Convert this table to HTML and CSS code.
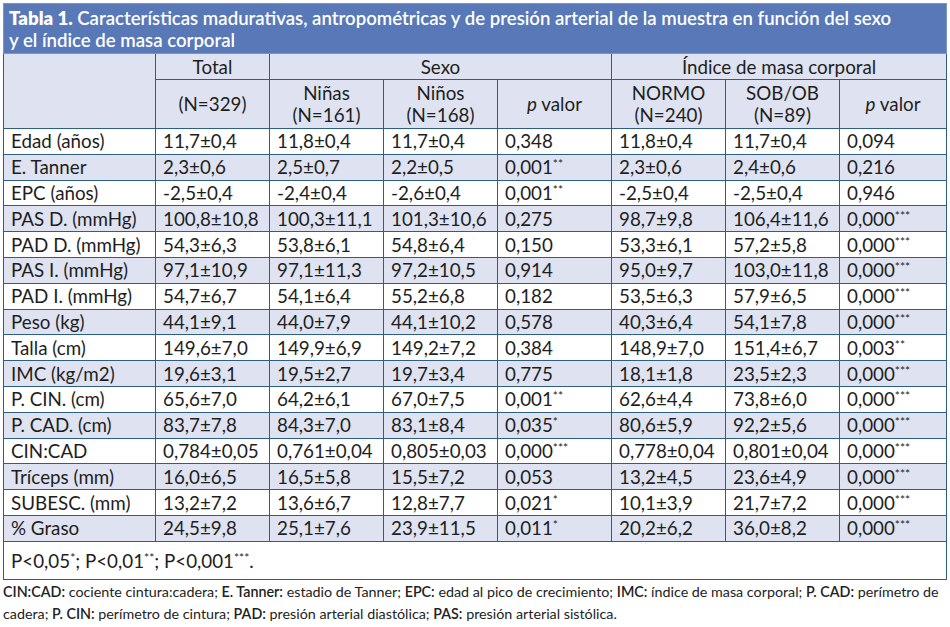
FILE: index.html
```html
<!DOCTYPE html>
<html lang="es">
<head>
<meta charset="utf-8">
<title>Tabla 1</title>
<link rel="stylesheet" href="styles.css">
</head>
<body>
<div class="page">
<table class="data">
  <colgroup>
    <col class="c-label"><col class="c-num"><col class="c-num"><col class="c-num"><col class="c-num"><col class="c-num"><col class="c-num"><col class="c-last">
  </colgroup>
  <thead>
    <tr><th colspan="8" class="title"><b>Tabla 1.</b> Características madurativas, antropométricas y de presión arterial de la muestra en función del sexo<br>y el índice de masa corporal</th></tr>
    <tr class="h1">
      <th rowspan="2"></th>
      <th>Total</th>
      <th colspan="3">Sexo</th>
      <th colspan="3">Índice de masa corporal</th>
    </tr>
    <tr class="h2">
      <th>(N=329)</th>
      <th>Niñas<br>(N=161)</th>
      <th>Niños<br>(N=168)</th>
      <th><i>p</i> valor</th>
      <th>NORMO<br>(N=240)</th>
      <th>SOB/OB<br>(N=89)</th>
      <th><i>p</i> valor</th>
    </tr>
  </thead>
  <tbody>
    <tr><td>Edad (años)</td><td>11,7±0,4</td><td>11,8±0,4</td><td>11,7±0,4</td><td>0,348</td><td>11,8±0,4</td><td>11,7±0,4</td><td>0,094</td></tr>
    <tr><td>E. Tanner</td><td>2,3±0,6</td><td>2,5±0,7</td><td>2,2±0,5</td><td>0,001<sup>**</sup></td><td>2,3±0,6</td><td>2,4±0,6</td><td>0,216</td></tr>
    <tr><td>EPC (años)</td><td>-2,5±0,4</td><td>-2,4±0,4</td><td>-2,6±0,4</td><td>0,001<sup>**</sup></td><td>-2,5±0,4</td><td>-2,5±0,4</td><td>0,946</td></tr>
    <tr><td>PAS D. (mmHg)</td><td>100,8±10,8</td><td>100,3±11,1</td><td>101,3±10,6</td><td>0,275</td><td>98,7±9,8</td><td>106,4±11,6</td><td>0,000<sup>***</sup></td></tr>
    <tr><td>PAD D. (mmHg)</td><td>54,3±6,3</td><td>53,8±6,1</td><td>54,8±6,4</td><td>0,150</td><td>53,3±6,1</td><td>57,2±5,8</td><td>0,000<sup>***</sup></td></tr>
    <tr><td>PAS I. (mmHg)</td><td>97,1±10,9</td><td>97,1±11,3</td><td>97,2±10,5</td><td>0,914</td><td>95,0±9,7</td><td>103,0±11,8</td><td>0,000<sup>***</sup></td></tr>
    <tr><td>PAD I. (mmHg)</td><td>54,7±6,7</td><td>54,1±6,4</td><td>55,2±6,8</td><td>0,182</td><td>53,5±6,3</td><td>57,9±6,5</td><td>0,000<sup>***</sup></td></tr>
    <tr><td>Peso (kg)</td><td>44,1±9,1</td><td>44,0±7,9</td><td>44,1±10,2</td><td>0,578</td><td>40,3±6,4</td><td>54,1±7,8</td><td>0,000<sup>***</sup></td></tr>
    <tr><td>Talla (cm)</td><td>149,6±7,0</td><td>149,9±6,9</td><td>149,2±7,2</td><td>0,384</td><td>148,9±7,0</td><td>151,4±6,7</td><td>0,003<sup>**</sup></td></tr>
    <tr><td>IMC (kg/m2)</td><td>19,6±3,1</td><td>19,5±2,7</td><td>19,7±3,4</td><td>0,775</td><td>18,1±1,8</td><td>23,5±2,3</td><td>0,000<sup>***</sup></td></tr>
    <tr><td>P. CIN. (cm)</td><td>65,6±7,0</td><td>64,2±6,1</td><td>67,0±7,5</td><td>0,001<sup>**</sup></td><td>62,6±4,4</td><td>73,8±6,0</td><td>0,000<sup>***</sup></td></tr>
    <tr><td>P. CAD. (cm)</td><td>83,7±7,8</td><td>84,3±7,0</td><td>83,1±8,4</td><td>0,035<sup>*</sup></td><td>80,6±5,9</td><td>92,2±5,6</td><td>0,000<sup>***</sup></td></tr>
    <tr><td>CIN:CAD</td><td>0,784±0,05</td><td>0,761±0,04</td><td>0,805±0,03</td><td>0,000<sup>***</sup></td><td>0,778±0,04</td><td>0,801±0,04</td><td>0,000<sup>***</sup></td></tr>
    <tr><td>Tríceps (mm)</td><td>16,0±6,5</td><td>16,5±5,8</td><td>15,5±7,2</td><td>0,053</td><td>13,2±4,5</td><td>23,6±4,9</td><td>0,000<sup>***</sup></td></tr>
    <tr><td>SUBESC. (mm)</td><td>13,2±7,2</td><td>13,6±6,7</td><td>12,8±7,7</td><td>0,021<sup>*</sup></td><td>10,1±3,9</td><td>21,7±7,2</td><td>0,000<sup>***</sup></td></tr>
    <tr><td>% Graso</td><td>24,5±9,8</td><td>25,1±7,6</td><td>23,9±11,5</td><td>0,011<sup>*</sup></td><td>20,2±6,2</td><td>36,0±8,2</td><td>0,000<sup>***</sup></td></tr>
  </tbody>
  <tfoot>
    <tr><td colspan="8" class="sig">P&lt;0,05<sup>*</sup>; P&lt;0,01<sup>**</sup>; P&lt;0,001<sup>***</sup>.</td></tr>
  </tfoot>
</table>
<p class="legend"><b>CIN:CAD:</b> cociente cintura:cadera; <b>E. Tanner:</b> estadio de Tanner; <b>EPC:</b> edad al pico de crecimiento; <b>IMC:</b> índice de masa corporal; <b>P. CAD:</b> perímetro de<br>cadera; <b>P. CIN:</b> perímetro de cintura; <b>PAD:</b> presión arterial diastólica; <b>PAS:</b> presión arterial sistólica.</p>
</div>
</body>
</html>
```

FILE: styles.css
```css
html, body {
  margin: 0;
  padding: 0;
  background: #ffffff;
}

.page {
  padding: 3px 4px 0 3px;
  font-family: "Lato", "Liberation Sans", sans-serif;
  color: #1e1e1e;
}

.data {
  border-collapse: collapse;
  table-layout: fixed;
  width: 943px;
  font-size: 18.8px;
}

.c-label { width: 152px; }
.c-num { width: 114px; }
.c-last { width: 107px; }

.data th,
.data td {
  border: 1px solid #2c5f82;
  padding: 0 0 0 7px;
  font-weight: normal;
}

.data th.title {
  background: #5878b8;
  color: #ffffff;
  text-align: left;
  font-weight: 600;
  font-size: 18.6px;
  line-height: 22px;
  height: 48px;
  padding: 1px 6px 0 5px;
  border-color: #7d98b6;
  white-space: nowrap;
}

.data th.title b {
  font-weight: 800;
}

.data thead th {
  background: #dfe3f1;
  text-align: center;
  padding: 0;
  line-height: 22px;
}

.data .h1 th {
  height: 25px;
}

.data .h2 th {
  height: 48px;
}

.data tbody td {
  height: 24.8px;
  line-height: 20px;
  white-space: nowrap;
}

.data tbody tr:nth-child(even) td {
  background: #dfe3f1;
}

.data sup {
  font-size: 12px;
  line-height: 0;
  vertical-align: 6px;
}

.data td.sig {
  height: 37px;
  padding-left: 7px;
}

.legend {
  margin: 1px 0 0 0;
  font-size: 14.3px;
  line-height: 22px;
  color: #222222;
  white-space: nowrap;
}

.legend b {
  font-weight: 600;
}
```
